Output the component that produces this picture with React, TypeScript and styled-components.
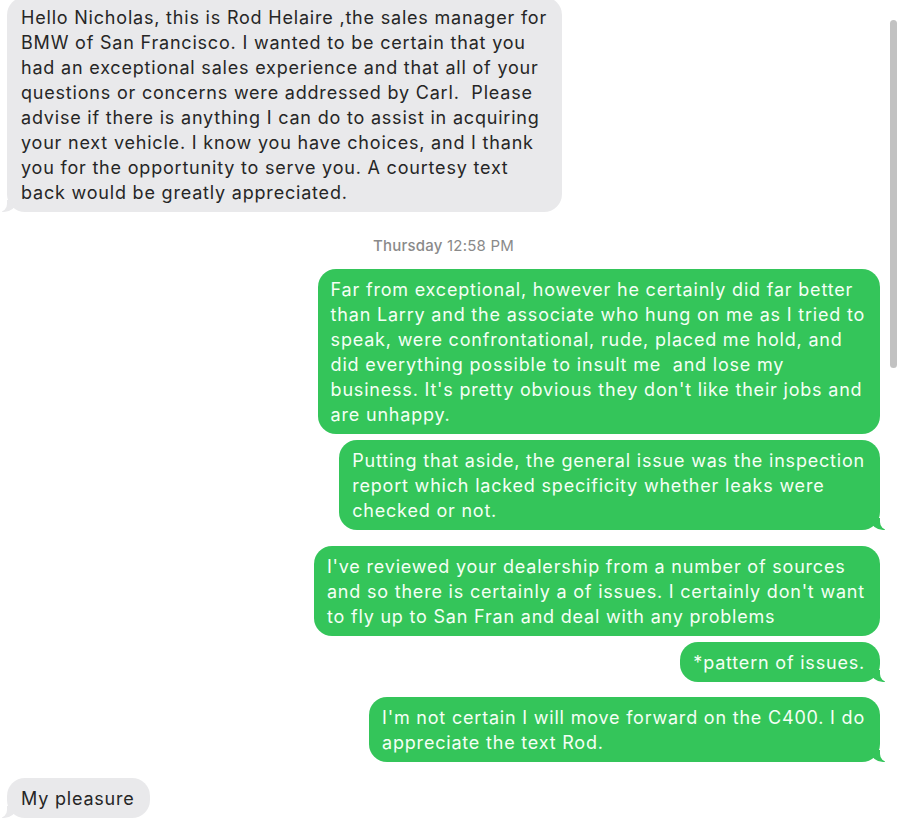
import * as React from 'react';
import styled, { createGlobalStyle } from 'styled-components';

type Msg = {
  from: 'me' | 'them';
  lines: string[];
  tail?: boolean;
  gap?: number;
};

const messages: Msg[] = [
  {
    from: 'me',
    gap: 0,
    tail: false,
    lines: [
      'Far from exceptional, however he certainly did far better',
      'than Larry and the associate who hung on me as I tried to',
      'speak, were confrontational, rude, placed me hold, and',
      'did everything possible to insult me\u00a0 and lose my',
      "business. It's pretty obvious they don't like their jobs and",
      'are unhappy.',
    ],
  },
  {
    from: 'me',
    gap: 6,
    tail: true,
    lines: [
      'Putting that aside, the general issue was the inspection',
      'report which lacked specificity whether leaks were',
      'checked or not.',
    ],
  },
  {
    from: 'me',
    gap: 16,
    tail: false,
    lines: [
      "I've reviewed your dealership from a number of sources",
      "and so there is certainly a of issues. I certainly don't want",
      'to fly up to San Fran and deal with any problems',
    ],
  },
  { from: 'me', gap: 6, tail: true, lines: ['*pattern of issues.'] },
  {
    from: 'me',
    gap: 15,
    tail: true,
    lines: ["I'm not certain I will move forward on the C400. I do", 'appreciate the text Rod.'],
  },
  { from: 'them', gap: 16, tail: true, lines: ['My pleasure'] },
];

const firstMessage = [
  'Hello Nicholas, this is Rod Helaire ,the sales manager for',
  'BMW of San Francisco. I wanted to be certain that you',
  'had an exceptional sales experience and that all of your',
  'questions or concerns were addressed by Carl.\u00a0 Please',
  'advise if there is anything I can do to assist in acquiring',
  'your next vehicle. I know you have choices, and I thank',
  'you for the opportunity to serve you. A courtesy text',
  'back would be greatly appreciated.',
];

const App = () => {
  return (
    <Page>
      <GlobalStyle />
      <Thread>
        <Row from="them" gap={0}>
          <Bubble from="them" tail>
            {firstMessage.map((l, i) => (
              <Line key={i}>{l}</Line>
            ))}
          </Bubble>
        </Row>
        <Stamp>
          <b>Thursday</b> 12:58 PM
        </Stamp>
        {messages.map((m, i) => (
          <Row key={i} from={m.from} gap={m.gap || 0}>
            <Bubble from={m.from} tail={!!m.tail}>
              {m.lines.map((l, j) => (
                <Line key={j}>{l}</Line>
              ))}
            </Bubble>
          </Row>
        ))}
      </Thread>
      <Track>
        <Thumb />
      </Track>
    </Page>
  );
};

const GREEN = '#34c55a';
const GRAY = '#e9e9eb';

const GlobalStyle = createGlobalStyle`
  html, body {
    margin: 0;
    padding: 0;
    background: #ffffff;
    overflow: hidden;
  }
  body {
    font-family: Inter, "Liberation Sans", Arial, sans-serif;
  }
`;

const Page = styled.div`
  display: flex;
  width: 900px;
  height: 829px;
  overflow: hidden;
  background: #fff;
`;

const Thread = styled.div`
  width: 885px;
  flex: none;
  display: flex;
  flex-direction: column;
  margin-top: -3px;
  padding: 0 5px 0 7px;
  box-sizing: border-box;
`;

const Row = styled.div<{ from: 'me' | 'them'; gap: number }>`
  display: flex;
  justify-content: ${(p) => (p.from === 'me' ? 'flex-end' : 'flex-start')};
  margin-top: ${(p) => p.gap}px;
`;

const Bubble = styled.div<{ from: 'me' | 'them'; tail: boolean }>`
  position: relative;
  display: flex;
  flex-direction: column;
  padding: 7.5px 15px 7.5px ${(p) => (p.from === 'me' ? 13 : 14)}px;
  border-radius: 18px;
  background: ${(p) => (p.from === 'me' ? GREEN : GRAY)};
  color: ${(p) => (p.from === 'me' ? '#f4fff5' : '#262626')};
  font-size: 18px;
  line-height: 25px;
  letter-spacing: 0.8px;

  &::before,
  &::after {
    content: '';
    position: absolute;
    bottom: 0;
    display: ${(p) => (p.tail ? 'block' : 'none')};
  }

  &::before {
    width: 14px;
    height: 12px;
    background: ${(p) => (p.from === 'me' ? GREEN : GRAY)};
    ${(p) =>
      p.from === 'me'
        ? 'right: -5px; border-bottom-left-radius: 12px 10px;'
        : 'left: -5px; border-bottom-right-radius: 12px 10px;'}
  }

  &::after {
    width: 8px;
    height: 14px;
    background: #fff;
    ${(p) =>
      p.from === 'me'
        ? 'right: -8px; border-bottom-left-radius: 8px;'
        : 'left: -8px; border-bottom-right-radius: 8px;'}
  }
`;

const Line = styled.span`
  white-space: nowrap;
`;

const Stamp = styled.div`
  margin-top: 24px;
  margin-bottom: 13px;
  text-align: center;
  font-size: 15px;
  line-height: 20px;
  letter-spacing: 0.2px;
  color: #8a8a8a;

  b {
    font-weight: 500;
  }
`;

const Track = styled.div`
  width: 15px;
  flex: none;
  padding: 20px 3px 0 5px;
  box-sizing: border-box;
`;

const Thumb = styled.div`
  width: 7px;
  height: 348px;
  border-radius: 4px;
  background: #c2c2c2;
`;

export default App;
